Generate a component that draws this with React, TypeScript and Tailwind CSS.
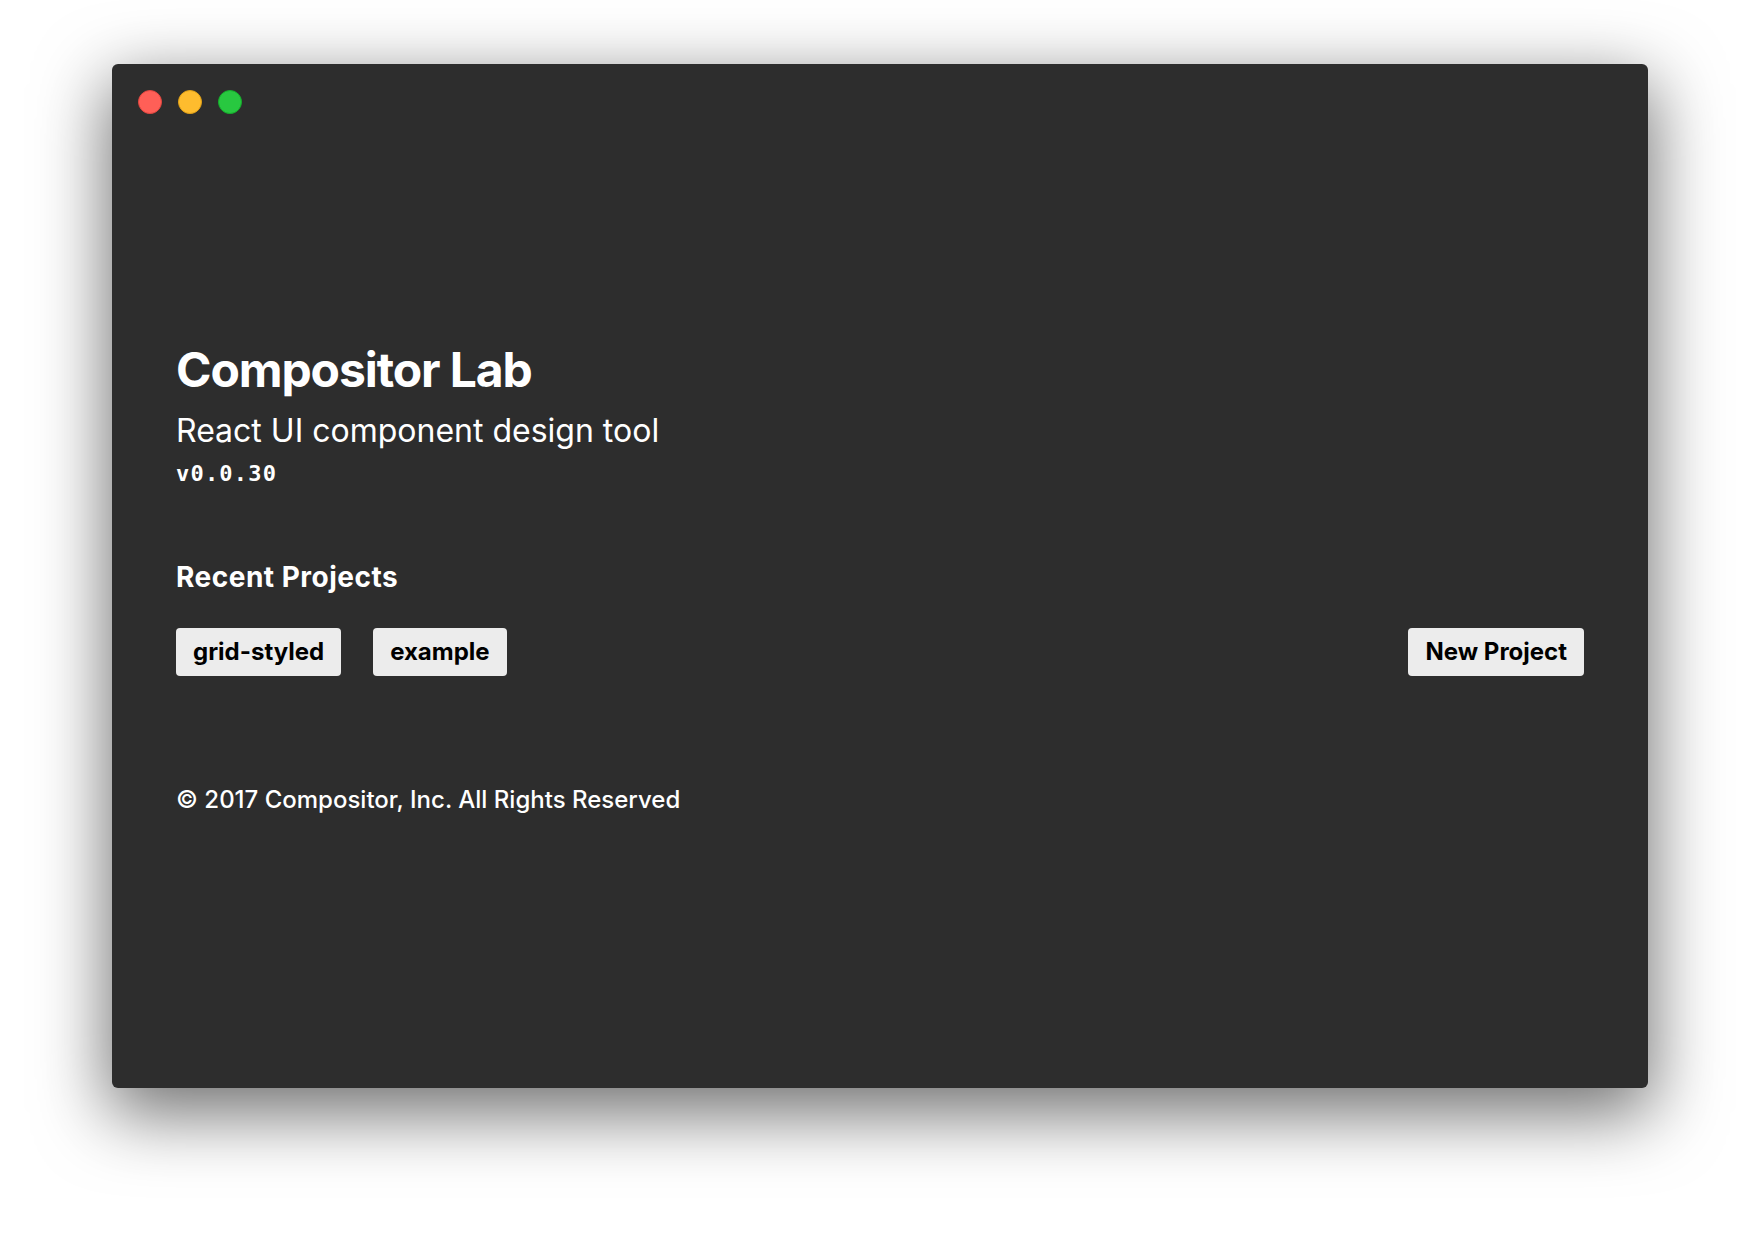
export default function App() {
  const projects = ["grid-styled", "example"];
  return (
    <div className="w-[1760px] h-[1248px] bg-white pt-16 pl-[112px] font-['Inter',sans-serif]">
      <div className="relative w-[1536px] h-[1024px] bg-[#2d2d2d] rounded-[6px] shadow-[0_22px_70px_4px_rgba(0,0,0,0.56)] flex flex-col">
        <div className="flex gap-4 mt-[26px] ml-[26px]">
          <div className="w-6 h-6 rounded-full bg-[#ff5f57] border border-[#e2463f]" />
          <div className="w-6 h-6 rounded-full bg-[#febc2e] border border-[#e1a116]" />
          <div className="w-6 h-6 rounded-full bg-[#28c840] border border-[#14ae2b]" />
        </div>
        <div className="flex flex-col px-16 text-white">
          <h1 className="mt-[232px] text-[48px] leading-none font-bold tracking-[-1.1px]">Compositor Lab</h1>
          <div className="mt-[21px] text-[32px] leading-none">React UI component design tool</div>
          <div className="mt-4 text-[22px] leading-none font-bold tracking-[1.2px] font-['DejaVu_Sans_Mono',monospace]">v0.0.30</div>
          <h2 className="mt-[78px] text-[28px] leading-none font-bold tracking-[0.5px]">Recent Projects</h2>
          <div className="mt-[37px] flex items-center">
            <div className="flex gap-8">
              {projects.map((p) => (
                <button key={p} className="h-12 px-[17px] rounded bg-[#ececec] text-black text-[24px] leading-none font-bold">
                  {p}
                </button>
              ))}
            </div>
            <button className="ml-auto h-12 px-[17px] rounded bg-[#ececec] text-black text-[24px] leading-none font-bold">
              New Project
            </button>
          </div>
          <div className="mt-[112px] text-[24px] leading-none font-medium">© 2017 Compositor, Inc. All Rights Reserved</div>
        </div>
      </div>
    </div>
  );
}
